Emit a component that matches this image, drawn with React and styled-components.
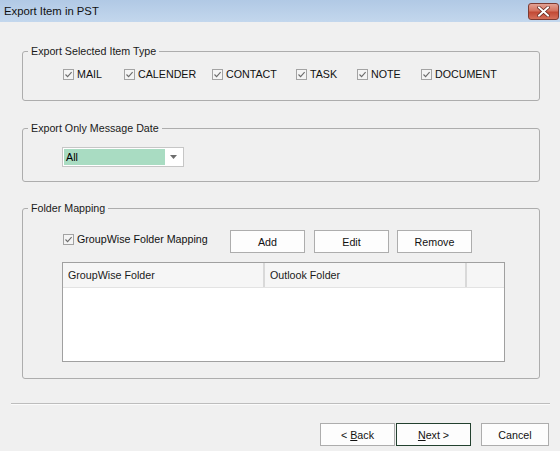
import React from 'react';
import styled, { createGlobalStyle } from 'styled-components';

const GlobalStyle = createGlobalStyle`
html, body {
  margin: 0;
  padding: 0;
  background: #f0f0f0;
}
`;

const Window = styled.div`
width: 560px;
height: 451px;
background: #f0f0f0;
display: flex;
flex-direction: column;
font-family: "Liberation Sans", Arial, sans-serif;
font-size: 10.7px;
color: #000;
overflow: hidden;
`;
const TitleBar = styled.div`
height: 22px;
flex: none;
display: flex;
align-items: center;
justify-content: space-between;
padding: 0 1px 0 4px;
background: linear-gradient(#b1c9e5, #c3d7ed);
color: #111;
font-size: 11.3px;
`;
const CloseButton = styled.div`
width: 29px;
height: 15px;
margin-top: 1px;
border: 1px solid #7d3b32;
border-radius: 3px;
background: linear-gradient(#e2a194 0%, #d4735f 45%, #c24a35 55%, #d5705a 100%);
display: flex;
align-items: center;
justify-content: center;
`;
const Content = styled.div`
display: flex;
flex-direction: column;
padding: 0 20px 0 22px;
`;
const Group = styled.div`
position: relative;
box-sizing: border-box;
height: ${p => p.$height}px;
margin-top: ${p => p.$top}px;
border: 1px solid #adadad;
border-radius: 3px;
padding: ${p => p.$pad};
`;
const Legend = styled.span`
position: absolute;
top: -8px;
left: 5px;
padding: 0 3px;
background: #f0f0f0;
color: #1a1a1a;
line-height: 14px;
`;
const CheckRow = styled.div`
display: flex;
align-items: center;
`;
const CheckLabel = styled.label`
display: flex;
align-items: center;
gap: 3px;
width: ${p => (p.$width ? `${p.$width}px` : 'auto')};
padding-top: ${p => p.$shift || 0}px;
color: #111;
`;
const Box = styled.span`
width: 11px;
height: 11px;
box-sizing: border-box;
border: 1px solid #a3a3a3;
background: #f4f4f4;
display: flex;
align-items: center;
justify-content: center;
`;
const Combo = styled.div`
width: 122px;
height: 20px;
box-sizing: border-box;
border: 1px solid #c6c6c6;
background: #fff;
padding: 1px;
display: flex;
`;
const ComboValue = styled.div`
flex: 1;
background: #a9dcc2;
padding-left: 2px;
display: flex;
align-items: center;
`;
const ComboArrow = styled.div`
width: 17px;
display: flex;
align-items: center;
justify-content: center;
`;
const Toolbar = styled.div`
display: flex;
align-items: flex-start;
`;
const Button = styled.button`
width: ${p => p.$width || 75}px;
height: 23px;
margin-left: ${p => p.$gap || 0}px;
box-sizing: border-box;
border: 1px solid ${p => (p.$primary ? '#23412f' : '#adadad')};
background: #fdfdfd;
font-family: inherit;
font-size: 10.7px;
color: #111;
padding: 0;
`;
const Table = styled.div`
width: 443px;
height: 100px;
margin-top: 9px;
margin-left: -1px;
box-sizing: border-box;
border: 1px solid #a0a0a0;
background: #fff;
`;
const HeaderRow = styled.div`
display: grid;
grid-template-columns: 202px 202px 1fr;
height: 24px;
background: #f6f6f6;
border-bottom: 1px solid #e3e3e3;
`;
const HeaderCell = styled.div`
display: flex;
align-items: center;
padding-left: 5px;
border-right: ${p => (p.$last ? 'none' : '2px solid #d9d9d9')};
color: #1a1a1a;
`;
const Separator = styled.div`
margin: 24px 10px 0 11px;
border-top: 1px solid #bdbdbd;
border-bottom: 1px solid #fbfbfb;
`;
const ButtonBar = styled.div`
display: flex;
justify-content: flex-end;
padding: 18px 11px 0 0;
`;

const Check = () => (
  <svg width="9" height="9" viewBox="0 0 9 9">
    <path d="M1.5 4.5 L3.6 6.6 L7.6 2.2" fill="none" stroke="#6b6b6b" strokeWidth="1.1" />
  </svg>
);

function CheckItem({ label, width, shift }) {
  return (
    <CheckLabel $width={width} $shift={shift}>
      <Box><Check /></Box>
      {label}
    </CheckLabel>
  );
}

// widths measured from one checkbox to the next
const itemTypes = [
  { label: 'MAIL', width: 61 },
  { label: 'CALENDER', width: 88 },
  { label: 'CONTACT', width: 84 },
  { label: 'TASK', width: 61 },
  { label: 'NOTE', width: 64 },
  { label: 'DOCUMENT' },
];

export default function App() {
  return (
    <Window>
      <GlobalStyle />
      <TitleBar>
        <span>Export Item in PST</span>
        <CloseButton>
          <svg width="13" height="11" viewBox="0 0 13 11">
            <path d="M2 1.5 L11 9.5 M11 1.5 L2 9.5" stroke="#5a1e16" strokeWidth="3.4" strokeLinecap="square" />
            <path d="M2 1.5 L11 9.5 M11 1.5 L2 9.5" stroke="#fff" strokeWidth="2" strokeLinecap="square" />
          </svg>
        </CloseButton>
      </TitleBar>
      <Content>
        <Group $top={29} $height={50} $pad="16px 0 0 40px">
          <Legend>Export Selected Item Type</Legend>
          <CheckRow>
            {itemTypes.map(t => <CheckItem key={t.label} label={t.label} width={t.width} />)}
          </CheckRow>
        </Group>
        <Group $top={27} $height={54} $pad="18px 0 0 39px">
          <Legend>Export Only Message Date</Legend>
          <Combo>
            <ComboValue>All</ComboValue>
            <ComboArrow>
              <svg width="7" height="4" viewBox="0 0 7 4">
                <path d="M0 0 L7 0 L3.5 4 Z" fill="#6d6d6d" />
              </svg>
            </ComboArrow>
          </Combo>
        </Group>
        <Group $top={26} $height={171} $pad="21px 0 0 40px">
          <Legend>Folder Mapping</Legend>
          <Toolbar>
            <CheckItem label="GroupWise Folder Mapping" width={167} shift={3} />
            <Button>Add</Button>
            <Button $gap={9}>Edit</Button>
            <Button $gap={8}>Remove</Button>
          </Toolbar>
          <Table>
            <HeaderRow>
              <HeaderCell>GroupWise Folder</HeaderCell>
              <HeaderCell>Outlook Folder</HeaderCell>
              <HeaderCell $last />
            </HeaderRow>
          </Table>
        </Group>
      </Content>
      <Separator />
      <ButtonBar>
        <Button><span>&lt; <u>B</u>ack</span></Button>
        <Button $primary $gap={1}><span><u>N</u>ext &gt;</span></Button>
        <Button $gap={10} $width={68}>Cancel</Button>
      </ButtonBar>
    </Window>
  );
}
